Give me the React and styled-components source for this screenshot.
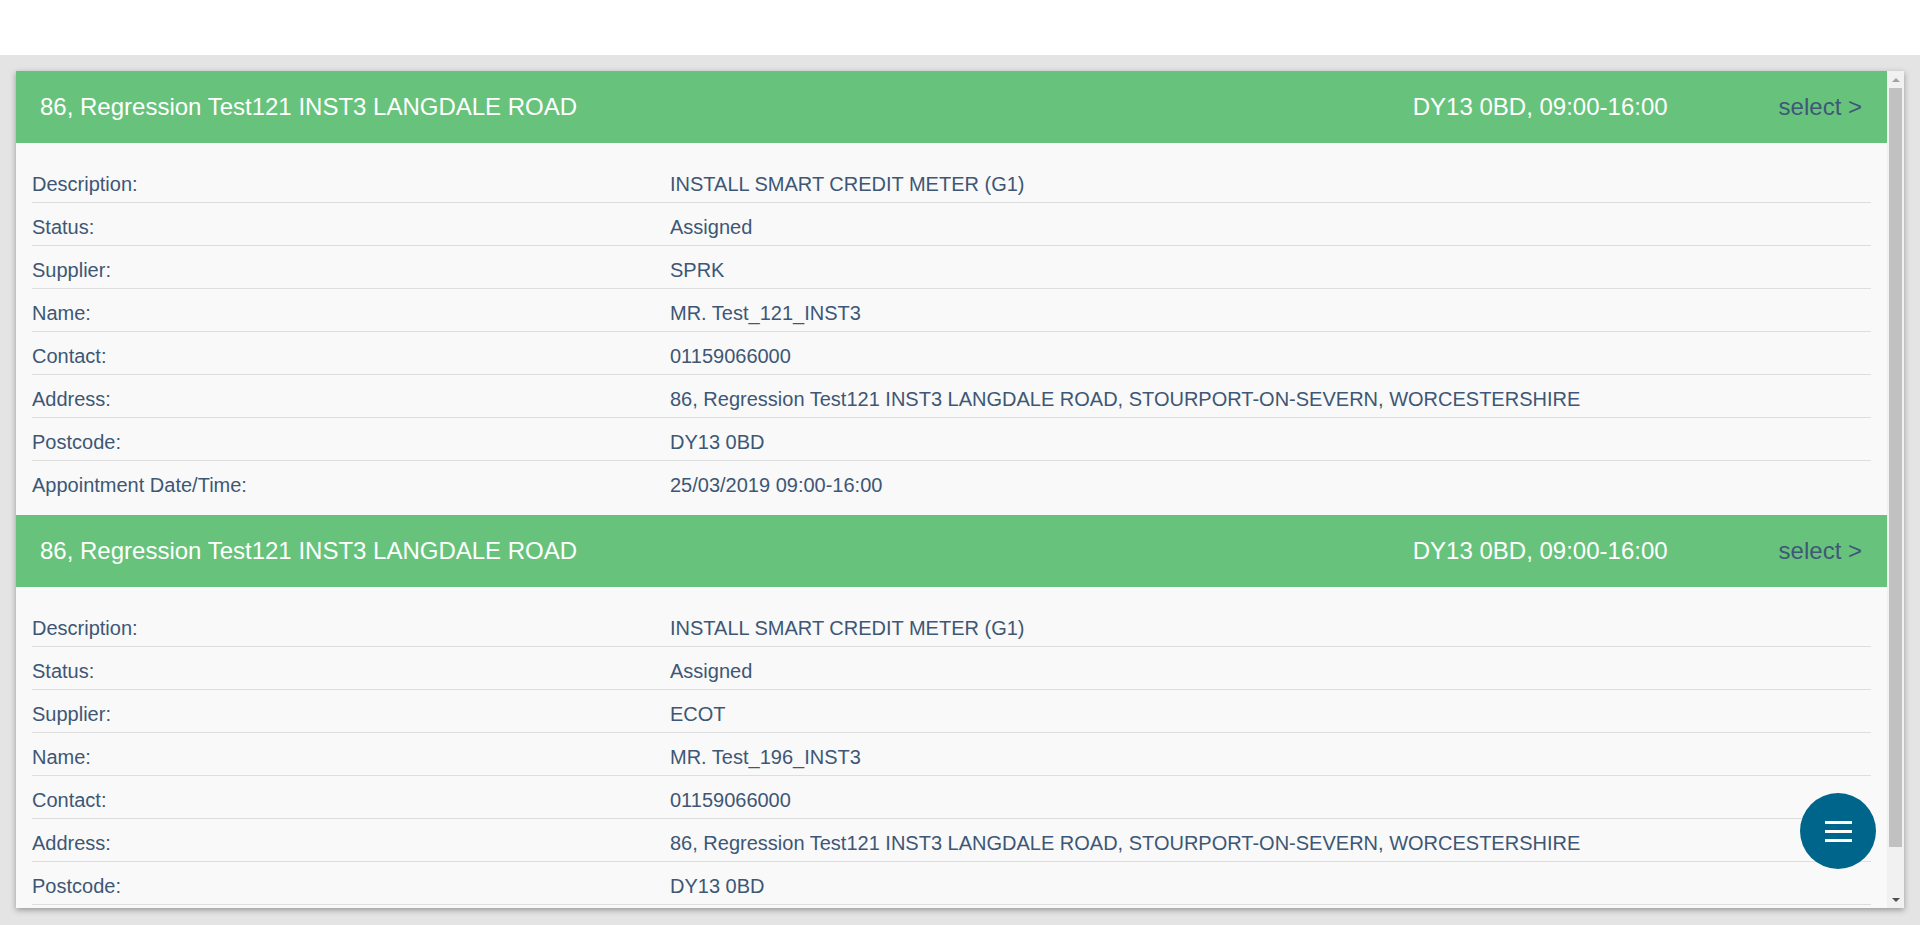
import React from 'react';
import styled, { createGlobalStyle } from 'styled-components';

const GlobalStyle = createGlobalStyle`
  html, body {
    margin: 0;
    padding: 0;
    height: 100%;
    overflow: hidden;
    background: #ffffff;
    font-family: "Liberation Sans", Arial, Helvetica, sans-serif;
  }
  #root {
    height: 100%;
  }
  * {
    box-sizing: border-box;
  }
`;

const Page = styled.div`
  display: flex;
  flex-direction: column;
  height: 100vh;
`;

const TopBar = styled.header`
  height: 55px;
  flex-shrink: 0;
  background: #ffffff;
`;

const Main = styled.main`
  flex: 1;
  background: #e4e4e4;
  padding: 16px 16px 17px 16px;
  min-height: 0;
`;

const Panel = styled.div`
  height: 100%;
  display: flex;
  background: #f9f9f9;
  box-shadow: 0 2px 6px rgba(0, 0, 0, 0.35);
`;

const Scroller = styled.div`
  flex: 1;
  min-width: 0;
  overflow: hidden;
`;

/* scrollbar drawn by hand: headless chrome hides the native one */
const ScrollTrack = styled.div`
  width: 17px;
  flex-shrink: 0;
  background: #f1f1f1;
  display: flex;
  flex-direction: column;
`;

const ArrowBtn = styled.div`
  height: 17px;
  flex-shrink: 0;
  display: flex;
  align-items: center;
  justify-content: center;

  &::before {
    content: '';
    width: 0;
    height: 0;
    border-left: 4px solid transparent;
    border-right: 4px solid transparent;
    ${p => p.$down
      ? 'border-top: 4px solid #505050;'
      : 'border-bottom: 4px solid #a3a3a3;'}
  }
`;

const ThumbArea = styled.div`
  flex: 1;
  display: flex;
  flex-direction: column;
  padding: 0 2px 44px 2px;
`;

const Thumb = styled.div`
  flex: 1;
  background: #c1c1c1;
`;

const Card = styled.section``;

const CardHeader = styled.div`
  height: 72px;
  background: #67c37b;
  display: flex;
  align-items: center;
  padding: 0 25px 0 24px;
  font-size: 24px;
  color: #ffffff;
`;

const Title = styled.div`
  flex: 1;
`;

const Slot = styled.div`
  color: #ffffff;
`;

const SelectLink = styled.a`
  margin-left: 111px;
  color: #3f5878;
  cursor: pointer;
`;

const CardBody = styled.div`
  padding: 17px 16px 12px 16px;
`;

const Row = styled.div`
  display: grid;
  grid-template-columns: 638px 1fr;
  padding: 13px 0 7px 0;
  line-height: 22px;
  font-size: 20px;
  color: #3d5775;
  border-bottom: 1px solid #dedede;

  &:last-child {
    border-bottom: 0;
  }
`;

const Label = styled.div``;

const Value = styled.div``;

const Fab = styled.button`
  position: fixed;
  right: 44px;
  bottom: 56px;
  width: 76px;
  height: 76px;
  border-radius: 50%;
  border: 0;
  padding: 0;
  background: #00658a;
  display: flex;
  flex-direction: column;
  align-items: center;
  justify-content: center;
  gap: 6px;
  cursor: pointer;
`;

const Bar = styled.span`
  display: block;
  width: 27px;
  height: 3px;
  background: #ffffff;
`;

const jobs = [
  {
    title: '86, Regression Test121 INST3 LANGDALE ROAD',
    slot: 'DY13 0BD, 09:00-16:00',
    details: [
      ['Description:', 'INSTALL SMART CREDIT METER (G1)'],
      ['Status:', 'Assigned'],
      ['Supplier:', 'SPRK'],
      ['Name:', 'MR. Test_121_INST3'],
      ['Contact:', '01159066000'],
      ['Address:', '86, Regression Test121 INST3 LANGDALE ROAD, STOURPORT-ON-SEVERN, WORCESTERSHIRE'],
      ['Postcode:', 'DY13 0BD'],
      ['Appointment Date/Time:', '25/03/2019 09:00-16:00'],
    ],
  },
  {
    title: '86, Regression Test121 INST3 LANGDALE ROAD',
    slot: 'DY13 0BD, 09:00-16:00',
    details: [
      ['Description:', 'INSTALL SMART CREDIT METER (G1)'],
      ['Status:', 'Assigned'],
      ['Supplier:', 'ECOT'],
      ['Name:', 'MR. Test_196_INST3'],
      ['Contact:', '01159066000'],
      ['Address:', '86, Regression Test121 INST3 LANGDALE ROAD, STOURPORT-ON-SEVERN, WORCESTERSHIRE'],
      ['Postcode:', 'DY13 0BD'],
      ['Appointment Date/Time:', '25/03/2019 09:00-16:00'],
    ],
  },
];

const App = () => {
  return (
    <Page>
      <GlobalStyle />
      <TopBar />
      <Main>
        <Panel>
          <Scroller>
            {jobs.map((job, i) => (
              <Card key={i}>
                <CardHeader>
                  <Title>{job.title}</Title>
                  <Slot>{job.slot}</Slot>
                  <SelectLink>select &gt;</SelectLink>
                </CardHeader>
                <CardBody>
                  {job.details.map(([label, value]) => (
                    <Row key={label}>
                      <Label>{label}</Label>
                      <Value>{value}</Value>
                    </Row>
                  ))}
                </CardBody>
              </Card>
            ))}
          </Scroller>
          <ScrollTrack>
            <ArrowBtn />
            <ThumbArea>
              <Thumb />
            </ThumbArea>
            <ArrowBtn $down />
          </ScrollTrack>
        </Panel>
      </Main>
      <Fab aria-label="menu">
        <Bar />
        <Bar />
        <Bar />
      </Fab>
    </Page>
  );
};

export default App;
